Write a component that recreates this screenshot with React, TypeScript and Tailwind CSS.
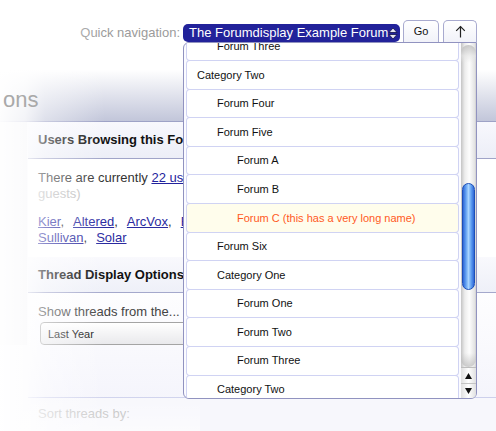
import React from "react";

type Row = { t: string; l: 0 | 1 | 2; sel?: boolean };

const rows: Row[] = [
  { t: "Forum Three", l: 1 },
  { t: "Category Two", l: 0 },
  { t: "Forum Four", l: 1 },
  { t: "Forum Five", l: 1 },
  { t: "Forum A", l: 2 },
  { t: "Forum B", l: 2 },
  { t: "Forum C (this has a very long name)", l: 2, sel: true },
  { t: "Forum Six", l: 1 },
  { t: "Category One", l: 1 },
  { t: "Forum One", l: 2 },
  { t: "Forum Two", l: 2 },
  { t: "Forum Three", l: 2 },
  { t: "Category Two", l: 1 },
  { t: "Forum Seven", l: 2 },
];

const indent: Record<number, string> = {
  0: "pl-[10px]",
  1: "pl-[30px]",
  2: "pl-[50px]",
};

function UpDown() {
  return (
    <svg width="10" height="13" viewBox="0 0 10 13" className="shrink-0">
      <polygon points="1,5.5 5,1 9,5.5" fill="#e8e8f0" stroke="#10104a" strokeWidth="0.8" />
      <polygon points="1,7.5 5,12 9,7.5" fill="#e8e8f0" stroke="#10104a" strokeWidth="0.8" />
    </svg>
  );
}

function ArrowUp() {
  return (
    <svg width="11" height="13" viewBox="0 0 11 13">
      <line x1="5.5" y1="1.5" x2="5.5" y2="12.5" stroke="#222" strokeWidth="1.2" />
      <polyline points="1.2,5.8 5.5,1.5 9.8,5.8" fill="none" stroke="#222" strokeWidth="1.2" />
    </svg>
  );
}

const names1 = ["Kier", "Altered", "ArcVox", "Brian", "Chris", "Dave"];
const names2 = ["Sullivan", "Solar"];

export default function App() {
  return (
    <div className="relative w-[496px] h-[431px] overflow-hidden bg-[#f7f7fc] font-['Liberation_Sans',Arial,sans-serif]">
      {/* top navigation */}
      <div className="h-[42px] bg-white flex items-end justify-end pr-[19px]">
        <span className="text-[13px] leading-[18px] text-[#9b9b9b] mr-[3px]">Quick navigation:</span>
        <div className="h-[18px] w-[217px] rounded-[5px] bg-[#22229a] text-white text-[13px] leading-[18px] flex items-center justify-between pl-[6px] pr-[3px] whitespace-nowrap">
          <span>The Forumdisplay Example Forum</span>
          <UpDown />
        </div>
        <button className="ml-[3px] h-[22px] w-[36px] rounded-t-[5px] border border-b-0 border-[#a8aacf] bg-[linear-gradient(to_bottom,#ffffff,#f1f2f9)] text-[11px] text-[#111] flex items-center justify-center">
          Go
        </button>
        <button className="ml-[4px] h-[22px] w-[34px] rounded-t-[5px] border border-b-0 border-[#a8aacf] bg-[linear-gradient(to_bottom,#ffffff,#f1f2f9)] flex items-center justify-center">
          <ArrowUp />
        </button>
      </div>

      {/* header bar */}
      <div className="h-[80px] border-b border-[#9ea2c6] bg-[linear-gradient(to_bottom,#ffffff_35%,#c2c6da)] flex items-end pb-[8px]">
        <span className="relative z-20 ml-[3px] text-[22px] leading-[26px] text-[#a9a9a9]">ons</span>
      </div>

      {/* body */}
      <div className="flex">
        <div className="w-[28px] shrink-0 h-[223px] bg-[#ececf1] border-r border-[#f8f8fb]" />
        <div className="flex-1 bg-[linear-gradient(to_bottom,#ffffff_55%,#f5f5fc)]">
          <div className="h-[37px] border-b border-[#a0a4c8] bg-[linear-gradient(to_bottom,#f8f8fd,#eceef7)] flex items-center pl-[10px] text-[13px] font-bold text-[#111] whitespace-nowrap">
            Users Browsing this Forum
          </div>
          <div className="pl-[10px] pt-[11px] text-[13px] leading-[16px]">
            <div className="whitespace-nowrap text-[#333]">
              There are currently <a className="text-[#22229c] underline">22 users browsing this forum</a>. (3 members &amp;
            </div>
            <div className="text-[#bdbdbd]">guests)</div>
            <div className="mt-[12px] whitespace-nowrap">
              {names1.map((n) => (
                <span key={n} className="mr-[9px]">
                  <a className="text-[#2a2aa0] underline">{n}</a>
                  <span className="text-[#333]">,</span>
                </span>
              ))}
            </div>
            <div className="whitespace-nowrap">
              <span className="mr-[9px]">
                <a className="text-[#2a2aa0] underline">{names2[0]}</a>
                <span className="text-[#333]">,</span>
              </span>
              <a className="text-[#2a2aa0] underline">{names2[1]}</a>
            </div>
          </div>
          <div className="mt-[11px] h-[36px] border-b border-[#a4a8cc] bg-[linear-gradient(to_bottom,#f9f9fd,#eef0f8)] flex items-center pl-[10px] text-[13px] font-bold text-[#111] whitespace-nowrap">
            Thread Display Options
          </div>
          <div className="pl-[10px] pt-[11px] text-[13px] leading-[16px] text-[#444]">
            <div className="whitespace-nowrap">Show threads from the...</div>
            <div className="mt-[2px] ml-[2px] h-[23px] w-[300px] rounded-[4px] border border-[#a4a4a4] bg-[linear-gradient(to_bottom,#ffffff,#e9e9ec)] flex items-center pl-[7px] text-[11px] text-[#111]">
              Last Year
            </div>
            <div className="h-[52px]" />
          </div>
        </div>
      </div>
      <div className="ml-[28px] border-t border-[#cdd0ec] pt-[8px] pl-[10px] text-[13px] leading-[16px] text-[#b9b9b9]">
        Sort threads by:
      </div>

      {/* left fade */}
      <div className="pointer-events-none absolute left-0 top-0 z-10 h-full w-[110px] bg-[linear-gradient(to_right,rgba(255,255,255,0.96)_0px,rgba(255,255,255,0.8)_25px,rgba(255,255,255,0.45)_45px,rgba(255,255,255,0)_105px)]" />
      <div className="pointer-events-none absolute left-0 bottom-0 z-10 h-[40px] w-[200px] bg-[linear-gradient(to_top,rgba(255,255,255,0.5),rgba(255,255,255,0))]" />

      {/* dropdown list */}
      <div className="absolute z-30 left-[183px] top-[42px] w-[294px] h-[357px] border border-[#9193c0] rounded-b-[6px] rounded-tl-[6px] bg-[#fbfbff] overflow-hidden flex">
        <div className="flex-1 overflow-hidden px-[3px]">
          <div className="mt-[-10.6px] flex flex-col gap-[1px]">
            {rows.map((r, i) => (
              <div
                key={i}
                className={
                  "h-[27.6px] shrink-0 rounded-[3px] shadow-[0_0_0_1px_#d0d3f3] flex items-center text-[11px] whitespace-nowrap " +
                  indent[r.l] +
                  (r.sel ? " bg-[#fffdec] text-[#ff5a1e]" : " bg-white text-[#111]")
                }
              >
                {r.t}
              </div>
            ))}
          </div>
        </div>
        <div className="w-[15px] shrink-0 flex flex-col bg-[linear-gradient(to_right,#c4c4c4,#ececec_25%,#fdfdfd_55%,#e4e4e4_90%,#cfcfcf)]">
          <div className="flex-1 relative pt-[2px]">
            <div className="h-[18px] rounded-t-full bg-[linear-gradient(to_bottom,#a8a8a8,#e4e4e4_60%,transparent)] opacity-60" />
            <div className="mt-[120px] mx-[1px] h-[107px] rounded-full border border-[#1d4fb8] bg-[linear-gradient(to_right,#2f66d6,#5e9df0_25%,#a8d4ff_50%,#5e9df0_75%,#2f66d6)]" />
            <div className="absolute bottom-0 left-0 right-0 h-[14px] rounded-b-full bg-[linear-gradient(to_top,#b8b8b8,transparent)] opacity-70" />
          </div>
          <div className="h-[31px] border-t border-[#bdbdbd] flex flex-col bg-[linear-gradient(to_right,#e0e0e0,#ffffff_50%,#e0e0e0)]">
            <div className="h-[16px] flex items-center justify-center border-b border-[#c4c4c4]">
              <svg width="7" height="6" viewBox="0 0 7 6"><polygon points="0,6 3.5,0 7,6" fill="#111" /></svg>
            </div>
            <div className="flex-1 flex items-center justify-center">
              <svg width="7" height="6" viewBox="0 0 7 6"><polygon points="0,0 3.5,6 7,0" fill="#111" /></svg>
            </div>
          </div>
        </div>
      </div>
    </div>
  );
}
